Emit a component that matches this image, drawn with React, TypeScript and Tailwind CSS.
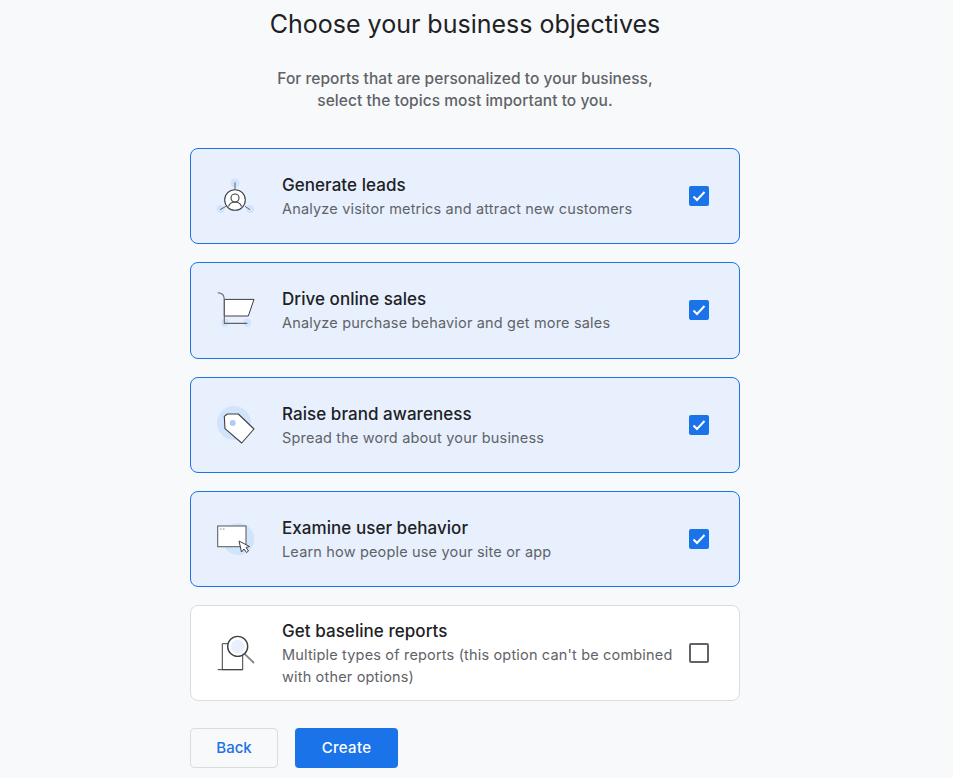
const font = "font-['Inter','Noto_Sans',sans-serif]";

function LeadsIcon() {
  return (
    <svg width="40" height="40" viewBox="0 0 40 40" fill="none">
      <circle cx="20" cy="7" r="4.5" fill="#d2e3fc" />
      <circle cx="5.7" cy="33" r="4" fill="#d2e3fc" />
      <circle cx="35" cy="33" r="4" fill="#d2e3fc" />
      <path d="M20 6.300v7.500M5 33.700l6-3.400M35 33.700l-5-3.400" stroke="#5f6368" strokeWidth="1" />
      <circle cx="20" cy="24" r="10.300" fill="#fff" stroke="#3c4043" strokeWidth="1.100" />
      <circle cx="20" cy="22" r="4" stroke="#3c4043" strokeWidth="1.100" />
      <path d="M13.500 30.500c1-3 4-4.500 6.500-4.500s5.500 1.500 6.500 4.500" stroke="#3c4043" strokeWidth="1.100" />
    </svg>
  );
}

function CartIcon() {
  return (
    <svg width="40" height="40" viewBox="0 0 40 40" fill="none">
      <circle cx="10" cy="32.700" r="4" fill="#d2e3fc" />
      <circle cx="32.300" cy="32.700" r="4" fill="#d2e3fc" />
      <path d="M9.300 9.400H39L33.300 26H9.300z" fill="#fff" stroke="#3c4043" strokeWidth="1" />
      <path d="M2.700 2.700c4 0 6.600 2.400 6.600 6.700v24h23" stroke="#5f6368" strokeWidth="1.100" />
    </svg>
  );
}

function TagIcon() {
  return (
    <svg width="40" height="40" viewBox="0 0 40 40" fill="none">
      <circle cx="19" cy="18" r="17" fill="#d2e3fc" />
      <path d="M9.300 11.400L12.300 9h11L39 24 26.700 38 10 23.700z" fill="#fff" stroke="#3c4043" strokeWidth="1.100" strokeLinejoin="round" />
      <circle cx="17.700" cy="18" r="3" fill="#aecbfa" />
    </svg>
  );
}

function BehaviorIcon() {
  return (
    <svg width="40" height="40" viewBox="0 0 40 40" fill="none">
      <circle cx="23.300" cy="20" r="16" fill="#d2e3fc" />
      <rect x="2.700" y="7" width="28.300" height="20.700" fill="#fff" stroke="#5f6368" strokeWidth="1.100" />
      <path d="M5 10h1.500M8 10h1.500" stroke="#80868b" strokeWidth="1" />
      <path d="M24 22l2.500 11 2.500-3 2.500 3.500 2-1.500-2.500-3.500 3.500-1z" fill="#fff" stroke="#3c4043" strokeWidth="1" strokeLinejoin="round" />
    </svg>
  );
}

function BaselineIcon() {
  return (
    <svg width="40" height="40" viewBox="0 0 40 40" fill="none">
      <path d="M7.300 10.700h20.400v26H7.300z" fill="#fff" stroke="#3c4043" strokeWidth="1" />
      <path d="M2.700 36.700h25" stroke="#3c4043" strokeWidth="1" />
      <path d="M29.300 20.700L39 30" stroke="#80868b" strokeWidth="1.800" />
      <circle cx="22.700" cy="13.400" r="10" fill="#fff" stroke="#3c4043" strokeWidth="1.400" />
      <circle cx="22.700" cy="13.400" r="6.700" fill="#e8f0fe" />
    </svg>
  );
}

const objectives = [
  { title: "Generate leads", desc: "Analyze visitor metrics and attract new customers", icon: <LeadsIcon />, checked: true },
  { title: "Drive online sales", desc: "Analyze purchase behavior and get more sales", icon: <CartIcon />, checked: true },
  { title: "Raise brand awareness", desc: "Spread the word about your business", icon: <TagIcon />, checked: true },
  { title: "Examine user behavior", desc: "Learn how people use your site or app", icon: <BehaviorIcon />, checked: true },
  {
    title: "Get baseline reports",
    desc: "Multiple types of reports (this option can't be combined with other options)",
    icon: <BaselineIcon />,
    checked: false,
  },
];

function Checkbox({ checked }: { checked: boolean }) {
  if (!checked) {
    return <div className="w-5 h-5 rounded-[2px] border-2 border-[#5f6368] bg-white" />;
  }
  return (
    <div className="w-5 h-5 rounded-[2px] bg-[#1a73e8] flex items-center justify-center">
      <svg width="16" height="16" viewBox="0 0 16 16" fill="none">
        <path d="M2.500 8.500l3.500 3.500 7.500-8" stroke="#fff" strokeWidth="2" />
      </svg>
    </div>
  );
}

export default function App() {
  return (
    <div className="h-[778px] overflow-hidden bg-[#f8f9fa]">
      <div className={`w-[930px] flex flex-col items-center ${font}`}>
        <h1 className="mt-[6px] text-[25px] leading-9 text-[#202124]">Choose your business objectives</h1>
        <p className="mt-[26px] text-center text-[15.5px] leading-[22px] font-medium tracking-[0.05px] text-[#5f6368]">
          For reports that are personalized to your business,
          <br />
          select the topics most important to you.
        </p>
        <div className="mt-[36px] w-[550px] flex flex-col gap-[18px]">
          {objectives.map((o) => (
            <div
              key={o.title}
              className={`h-[96.3px] rounded-lg border flex items-center ${
                o.checked ? "border-[#1a73e8] bg-[#e8f0fe]" : "border-[#dadce0] bg-white"
              }`}
            >
              <div className="ml-[24px] w-[40px] shrink-0">{o.icon}</div>
              <div className="ml-[27px] w-[400px] pt-px">
                <div className="text-[17px] leading-6 font-medium tracking-[0.05px] text-[#202124]">{o.title}</div>
                <div className="mt-px text-[14.5px] leading-[22px] tracking-[0.17px] text-[#5f6368]">{o.desc}</div>
              </div>
              <div className="ml-[7px]">
                <Checkbox checked={o.checked} />
              </div>
            </div>
          ))}
        </div>
        <div className="mt-[27px] w-[550px] flex gap-[17px]">
          <button className="w-[88px] h-10 rounded border border-[#dadce0] text-[15px] font-medium text-[#1a73e8]">Back</button>
          <button className="w-[103px] h-10 rounded bg-[#1a73e8] text-[15px] font-medium tracking-[0.3px] text-white">Create</button>
        </div>
      </div>
    </div>
  );
}
